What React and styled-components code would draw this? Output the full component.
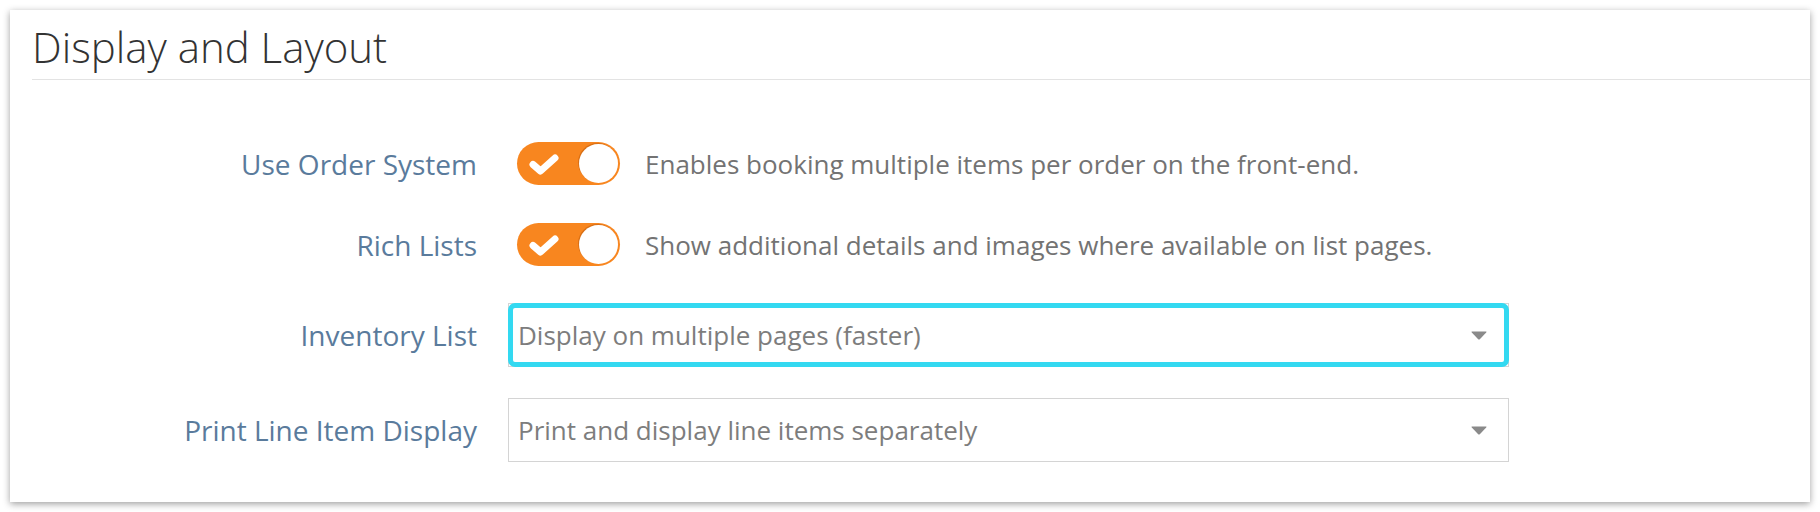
import React from "react";
import styled, { createGlobalStyle } from "styled-components";

const GlobalStyle = createGlobalStyle`
  html, body {
    margin: 0;
    padding: 0;
    background: #ffffff;
    font-family: "Open Sans", "Liberation Sans", sans-serif;
  }
`;

const Page = styled.div`
  width: 1820px;
  height: 512px;
  padding: 10px;
  box-sizing: border-box;
`;

const Panel = styled.section`
  height: 492px;
  background: #ffffff;
  box-shadow: 0 2px 7px rgba(0, 0, 0, 0.38);
  padding-left: 22px;
  box-sizing: border-box;
`;

const Title = styled.h2`
  margin: 0;
  padding-top: 9px;
  font-size: 42px;
  line-height: 56px;
  font-weight: 300;
  color: #333333;
`;

const Divider = styled.hr`
  margin: 4px 0 0;
  border: 0;
  height: 1px;
  background: #e3e3e3;
`;

const Rows = styled.div`
  display: flex;
  flex-direction: column;
`;

const Row = styled.div`
  display: grid;
  grid-template-columns: 445px 1fr;
  column-gap: 31px;
  align-items: center;
  margin-top: ${(p) => p.$space}px;
`;

const Label = styled.label`
  text-align: right;
  font-size: 28px;
  color: #5a7b9c;
  white-space: nowrap;
`;

const Control = styled.div`
  display: flex;
  align-items: center;
`;

const Toggle = styled.div`
  box-sizing: border-box;
  width: 103px;
  height: 43px;
  margin-left: 9px;
  border-radius: 22px;
  background: #f8861f;
  display: flex;
  align-items: center;
  justify-content: space-between;
  padding: 0 2px 0 12px;
  flex-shrink: 0;
`;

const Knob = styled.span`
  width: 39px;
  height: 39px;
  border-radius: 50%;
  background: #ffffff;
  box-shadow: -1px -1px 0 rgba(160, 70, 0, 0.35);
`;

const Description = styled.span`
  margin-left: 25px;
  font-size: 26px;
  color: #737373;
  white-space: nowrap;
`;

const SelectBox = styled.div`
  position: relative;
  box-sizing: border-box;
  width: 1001px;
  height: 64px;
  border: 1px solid #d4d4d4;
  display: flex;
  align-items: center;
  justify-content: space-between;
  padding: 0 21px 0 9px;
  font-size: 26px;
  color: #7d7d7d;

  ${(p) =>
    p.$focused &&
    `
    &::after {
      content: "";
      position: absolute;
      inset: -1px;
      border: 5px solid #33d9f1;
      border-radius: 7px;
      pointer-events: none;
    }
  `}
`;

const Caret = styled.svg`
  width: 16px;
  height: 9px;
  flex-shrink: 0;
`;

function Check() {
  return (
    <svg width="30" height="22" viewBox="0 0 30 22">
      <polyline
        points="4,11.5 11.5,18 26,5"
        fill="none"
        stroke="#ffffff"
        strokeWidth="7"
        strokeLinecap="round"
        strokeLinejoin="round"
      />
    </svg>
  );
}

function Switch() {
  return (
    <Toggle>
      <Check />
      <Knob />
    </Toggle>
  );
}

function Select({ value, focused }) {
  return (
    <SelectBox $focused={focused}>
      <span>{value}</span>
      <Caret viewBox="0 0 16 9">
        <path d="M1 0.5 H15 Q16 0.5 15.2 1.4 L8.8 8.2 Q8 9 7.2 8.2 L0.8 1.4 Q0 0.5 1 0.5 Z" fill="#8a8a8a" />
      </Caret>
    </SelectBox>
  );
}

export default function App() {
  return (
    <>
      <GlobalStyle />
      <Page>
        <Panel>
          <Title>Display and Layout</Title>
          <Divider />
          <Rows>
            <Row $space={62}>
              <Label>Use Order System</Label>
              <Control>
                <Switch />
                <Description>Enables booking multiple items per order on the front-end.</Description>
              </Control>
            </Row>
            <Row $space={38}>
              <Label>Rich Lists</Label>
              <Control>
                <Switch />
                <Description>Show additional details and images where available on list pages.</Description>
              </Control>
            </Row>
            <Row $space={37}>
              <Label>Inventory List</Label>
              <Control>
                <Select value="Display on multiple pages (faster)" focused />
              </Control>
            </Row>
            <Row $space={31}>
              <Label>Print Line Item Display</Label>
              <Control>
                <Select value="Print and display line items separately" />
              </Control>
            </Row>
          </Rows>
        </Panel>
      </Page>
    </>
  );
}
